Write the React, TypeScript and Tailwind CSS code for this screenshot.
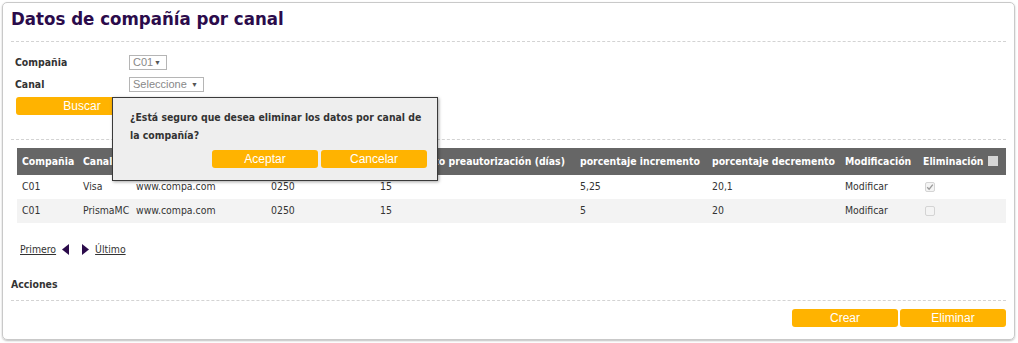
import React from 'react';

// Datos de compañía por canal — admin screen with a confirm dialog open over it.

const rows = [
  { cia: 'C01', canal: 'Visa', url: 'www.compa.com', cod: '0250', dias: '15', inc: '5,25', dec: '20,1', checked: true },
  { cia: 'C01', canal: 'PrismaMC', url: 'www.compa.com', cod: '0250', dias: '15', inc: '5', dec: '20', checked: false },
];

const headers = [
  'Compañia',
  'Canal',
  'URL',
  'Código comercio',
  'Vencimiento preautorización (días)',
  'porcentaje incremento',
  'porcentaje decremento',
  'Modificación',
];

function OrangeButton({ label, className }: { label: string; className: string }) {
  return (
    <button
      className={`h-[18px] rounded-[3px] bg-[#ffb300] text-[12px] leading-[18px] text-white font-['Liberation_Sans',Arial,sans-serif] ${className}`}
    >
      {label}
    </button>
  );
}

function FakeSelect({ value, width }: { value: string; width: string }) {
  return (
    <div
      className={`flex h-[15px] items-center justify-between border border-[#b5b5b5] bg-white pl-[3px] pr-[5px] text-[11px] leading-[13px] text-[#888] font-['Liberation_Sans',Arial,sans-serif] ${width}`}
    >
      <span>{value}</span>
      <span className="text-[7px] text-[#555]">▼</span>
    </div>
  );
}

function RowCheck({ checked }: { checked: boolean }) {
  return (
    <div className="flex h-[10px] w-[10px] items-center justify-center rounded-[2px] border border-[#d4d4d4] bg-[#f4f4f4]">
      {checked && (
        <svg width="8" height="8" viewBox="0 0 8 8">
          <path d="M1.2 4.3 L3.1 6.2 L6.8 1.6" fill="none" stroke="#9a9a9a" strokeWidth="1.3" />
        </svg>
      )}
    </div>
  );
}

export default function App() {
  return (
    <div className="h-[343px] w-[1018px] bg-white p-[2px] font-['DejaVu_Sans_Condensed','DejaVu_Sans',Verdana,sans-serif] text-[10.4px] text-[#333]">
      <div className="relative h-[338px] w-[1013px] rounded-[5px] border border-[#c9c9c9] shadow-[0_1px_2px_rgba(0,0,0,0.25)]">
        <h1 className="pl-[8px] pt-[4px] text-[18.5px] font-bold leading-[24px] text-[#2b0b4b]">
          Datos de compañía por canal
        </h1>
        <div className="mx-[8px] mt-[10px] border-t border-dashed border-[#d3d3d3]" />

        {/* Filtros */}
        <div className="ml-[12px] mt-[13px] grid grid-cols-[114px_auto] items-center gap-y-[7px] leading-[15px]">
          <span className="font-bold">Compañia</span>
          <FakeSelect value="C01" width="w-[38px]" />
          <span className="font-bold">Canal</span>
          <FakeSelect value="Seleccione" width="w-[75px]" />
        </div>
        <OrangeButton label="Buscar" className="ml-[13px] mt-[5px] w-[132px]" />
        <div className="mx-[8px] mt-[24px] border-t border-dashed border-[#d3d3d3]" />

        {/* Tabla */}
        <table className="ml-[14px] mt-[8px] w-[989px] table-fixed border-collapse">
          <colgroup>
            <col className="w-[61px]" />
            <col className="w-[53px]" />
            <col className="w-[135px]" />
            <col className="w-[109px]" />
            <col className="w-[200px]" />
            <col className="w-[132px]" />
            <col className="w-[133px]" />
            <col className="w-[78px]" />
            <col className="w-[88px]" />
          </colgroup>
          <thead>
            <tr className="h-[27px] bg-[#666666] text-left text-white">
              {headers.map((h) => (
                <th key={h} className="overflow-hidden whitespace-nowrap pl-[5px] font-bold">
                  {h}
                </th>
              ))}
              <th className="pl-[5px] font-bold">
                <span className="inline-flex items-center gap-[4px]">
                  Eliminación
                  <span className="inline-block h-[10px] w-[10px] bg-[#d6d6d6]" />
                </span>
              </th>
            </tr>
          </thead>
          <tbody>
            {rows.map((r, i) => (
              <tr key={r.canal} className={`h-[24px] ${i % 2 ? 'bg-[#f3f3f3]' : 'bg-white'}`}>
                <td className="pl-[5px]">{r.cia}</td>
                <td className="pl-[5px]">{r.canal}</td>
                <td className="pl-[5px]">{r.url}</td>
                <td className="pl-[5px]">{r.cod}</td>
                <td className="pl-[5px]">{r.dias}</td>
                <td className="pl-[5px]">{r.inc}</td>
                <td className="pl-[5px]">{r.dec}</td>
                <td className="pl-[5px]">Modificar</td>
                <td className="pl-[7px]">
                  <RowCheck checked={r.checked} />
                </td>
              </tr>
            ))}
          </tbody>
        </table>

        {/* Paginación */}
        <div className="ml-[17px] mt-[19px] flex items-center">
          <span className="underline">Primero</span>
          <svg width="7" height="11" viewBox="0 0 7 11" className="ml-[6px]">
            <path d="M7 0 L0 5.5 L7 11 Z" fill="#2b0b4b" />
          </svg>
          <svg width="7" height="11" viewBox="0 0 7 11" className="ml-[13px]">
            <path d="M0 0 L7 5.5 L0 11 Z" fill="#2b0b4b" />
          </svg>
          <span className="ml-[6px] underline">Último</span>
        </div>

        <div className="ml-[8px] mt-[19px] font-bold">Acciones</div>
        <div className="mx-[8px] mt-[8px] border-t border-dashed border-[#d3d3d3]" />
        <div className="mr-[8px] mt-[8px] flex justify-end gap-[2px]">
          <OrangeButton label="Crear" className="w-[106px]" />
          <OrangeButton label="Eliminar" className="w-[106px]" />
        </div>

        {/* Diálogo de confirmación */}
        <div className="absolute left-[109px] top-[94px] h-[84px] w-[326px] border border-[#3a3a3a] bg-[#eeeeee] shadow-[1px_1px_3px_rgba(0,0,0,0.35)]">
          <p className="pl-[17px] pr-[8px] pt-[10px] font-bold leading-[18px]">
            ¿Está seguro que desea eliminar los datos por canal de la compañía?
          </p>
          <div className="mr-[10px] mt-[6px] flex justify-end gap-[3px]">
            <OrangeButton label="Aceptar" className="w-[106px]" />
            <OrangeButton label="Cancelar" className="w-[106px]" />
          </div>
        </div>
      </div>
    </div>
  );
}
